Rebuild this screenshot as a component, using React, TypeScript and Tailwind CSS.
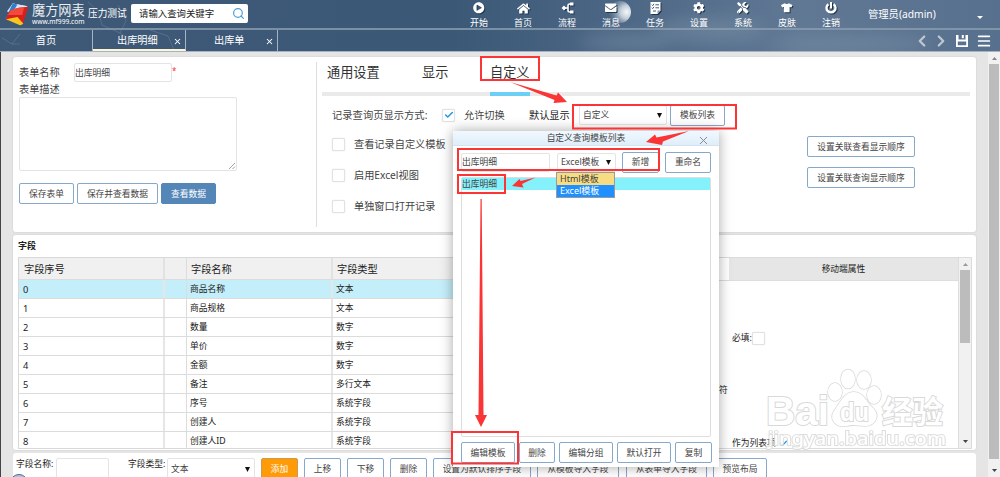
import type { ReactNode } from "react";
import {
  FaCog,
  FaEnvelope,
  FaHome,
  FaPlayCircle,
  FaPowerOff,
  FaTools,
  FaTshirt,
} from "react-icons/fa";
import { Check, ChevronLeft, ChevronRight, Menu, Search, X } from "lucide-react";

const navItems = [
  { label: "开始", icon: <FaPlayCircle /> },
  { label: "首页", icon: <FaHome className="text-[13px]" /> },
  { label: "流程", icon: <FlowIcon /> },
  { label: "消息", icon: <FaEnvelope /> },
  { label: "任务", icon: <TaskIcon /> },
  { label: "设置", icon: <FaCog /> },
  { label: "系统", icon: <FaTools /> },
  { label: "皮肤", icon: <FaTshirt /> },
  { label: "注销", icon: <PowerIcon /> },
];

const fields = [
  ["商品名称", "文本"],
  ["商品规格", "文本"],
  ["数量", "数字"],
  ["单价", "数字"],
  ["金额", "数字"],
  ["备注", "多行文本"],
  ["序号", "系统字段"],
  ["创建人", "系统字段"],
  ["创建人ID", "系统字段"],
];

const buttonColors = {
  outline: "border-[#86a8cb] bg-white text-[#444]",
  primary: "border-[#5486b8] bg-[#5486b8] text-white",
  orange: "border-[#c99a52] bg-[#ff9b06] text-white",
};

function FlowIcon() {
  return (
    <svg width="13" height="12" viewBox="0 0 13 12" fill="none" stroke="#fff" strokeWidth="1.6">
      <path d="M12 2H8.5Q7 2 7 3.500V8.500Q7 10 8.500 10H12M3 6H7" />
      <path d="M9 .5h3.500v3H9zM9 8.500h3.500v3H9z" fill="#fff" stroke="none" />
      <path d="M3 3.600L5.400 6L3 8.400L.6 6z" fill="#fff" stroke="none" />
    </svg>
  );
}

function TaskIcon() {
  return (
    <svg width="11" height="12" viewBox="0 0 11 12">
      <path d="M.5 0h10v8.500L7.500 12h-7z" fill="#fff" />
      <path
        d="M1.800 2.700l.9.900 1.300-1.800M1.800 5.700l.9.900L4 4.800M5.400 2.800h3.600M5.400 5.800h3.600M3 9h3"
        stroke="#3f5a77"
        fill="none"
      />
      <path d="M7.500 12V8.500h3z" fill="#8497ab" />
    </svg>
  );
}

function PowerIcon() {
  return (
    <svg width="12" height="12" viewBox="0 0 12 12" fill="none">
      <path d="M3.400 2.200A4.500 4.500 0 1 0 8.600 2.200" stroke="#fff" strokeWidth="2.400" />
      <path d="M6 0v6.500" stroke="#fff" strokeWidth="2" />
    </svg>
  );
}

function Logo() {
  return (
    <svg width="24" height="24" viewBox="0 0 25 24" className="shrink-0">
      <path d="M8 1L23.500 4L13 12L2 9.500z" fill="#dce9f6" />
      <path d="M8 1L23.500 4L19 7L6 5z" fill="#d3e6f7" />
      <path d="M8 1L13 2L6 13L0 18z" fill="#2f7fd0" />
      <path d="M6 8Q14 5 24 4.500L19 22L1 18Q2 12 6 8z" fill="#d71f1c" />
      <path d="M6 8Q14 5 20 5L18 13L3 13z" fill="#f3483c" />
      <path d="M1 17.500L13 15L19 22Q17 24 15 23.500z" fill="#fbc61c" />
    </svg>
  );
}

function Button({
  variant = "outline",
  className = "",
  children,
}: {
  variant?: keyof typeof buttonColors;
  className?: string;
  children: ReactNode;
}) {
  return (
    <button
      className={`flex h-[21px] shrink-0 items-center justify-center rounded-[2px] border pt-[2px] text-[8.750px] whitespace-nowrap ${buttonColors[variant]} ${className}`}
    >
      {children}
    </button>
  );
}

function Checkbox({ checked = false }: { checked?: boolean }) {
  return (
    <span className="flex h-[13px] w-[13px] shrink-0 items-center justify-center rounded-[2px] border border-[#e2e2e2] bg-white shadow-[0_0_1px_#ccc]">
      {checked && <Check size={10} strokeWidth={3.500} className="text-[#2196e8]" />}
    </span>
  );
}

function Select({ className = "", children }: { className?: string; children: ReactNode }) {
  return (
    <div
      className={`flex shrink-0 items-center justify-between rounded-[2px] border border-[#e4e4e4] bg-white pt-[2px] pr-1 pl-[3px] text-[#444] ${className}`}
    >
      <span className="whitespace-nowrap">{children}</span>
      <svg width="5" height="5" viewBox="0 0 5 5" className="mb-[1px]">
        <path d="M0 0h5L2.500 5z" fill="#111" />
      </svg>
    </div>
  );
}

function Header() {
  return (
    <header className="relative h-[52px] shrink-0 overflow-hidden bg-[linear-gradient(90deg,#3e5976_0%,#3b5877_45%,#4c6785_62%,#607894_80%,#57708d_100%)] text-white">
      <svg className="absolute inset-0" width="1000" height="52" fill="none">
        <defs>
          <filter id="haze" x="-30%" y="-80%" width="160%" height="260%">
            <feGaussianBlur stdDeviation="8" />
          </filter>
          <radialGradient id="moon" cx=".8" cy=".5" r=".75">
            <stop offset="0" stopColor="#fff" stopOpacity=".95" />
            <stop offset=".4" stopColor="#dfe6ed" stopOpacity=".8" />
            <stop offset="1" stopColor="#8296ac" stopOpacity=".15" />
          </radialGradient>
        </defs>
        <g filter="url(#haze)" fill="#93a5b8" opacity=".3">
          <ellipse cx="625" cy="42" rx="46" ry="9" />
          <ellipse cx="710" cy="30" rx="55" ry="12" />
          <ellipse cx="850" cy="44" rx="80" ry="8" />
        </g>
        <circle cx="620" cy="12" r="11" fill="url(#moon)" />
        <g stroke="#8ca0b5" strokeOpacity=".3">
          <path d="M88 2l10 9 14-3M98 11l4 14 18 8M118 5l8 16-6 12 14 8M150 30l18 6 6 14M2 38l10 6 8-10M12 44h8" />
        </g>
      </svg>
      <div className="relative flex h-[28px]">
        <div className="flex w-[131px] items-start pt-[2px] pl-[5px]">
          <Logo />
          <div className="ml-[3px] w-[54px] shrink-0">
            <div className="text-[13.200px] leading-[17px] whitespace-nowrap text-[#e8edf2]">魔方网表</div>
            <div className="text-[6.700px] leading-[6px]">www.mf999.com</div>
          </div>
          <span className="ml-[2px] pt-[5px] text-[9.700px] leading-[14px] whitespace-nowrap">压力测试</span>
        </div>
        <div className="mt-[4px] flex h-[19px] w-[117px] items-center justify-between rounded-[2px] bg-white pr-[3px] pl-[8px]">
          <span className="pt-[1px] text-[9.400px] text-[#222]">请输入查询关键字</span>
          <Search size={13} strokeWidth={2.200} className="text-[#4d9edb]" />
        </div>
        <nav className="ml-[209px] flex">
          {navItems.map((item) => (
            <div key={item.label} className="flex w-[44px] flex-col items-center pt-[2px]">
              <span className="flex h-[12px] items-center text-[11.500px] drop-shadow-[1px_1px_0_#22364c]">
                {item.icon}
              </span>
              <span className="pt-[1px] text-[9px] leading-[15px]">{item.label}</span>
            </div>
          ))}
        </nav>
        <span className="ml-[15px] pt-[6px] text-[10.300px] leading-[16px] whitespace-nowrap">管理员(admin)</span>
        <svg className="mt-[16px] ml-[41px]" width="6" height="3" viewBox="0 0 6 3">
          <path d="M0 0h6L3 3z" fill="#fff" />
        </svg>
      </div>
      <div className="relative flex h-[24px] border-t-2 border-b border-t-[#8b9db0]/80 border-b-[#a5b3c2] text-[10.200px]">
        <div className="flex w-[93px] items-center justify-center border-r border-[#a5b3c2] pt-[1px]">首页</div>
        <div className="flex w-[93px] items-center justify-between border-r border-b-2 border-r-[#a5b3c2] border-b-[#fff6d5] pt-[3px] pr-[3px] pl-[24px]">
          出库明细
          <X size={9} strokeWidth={2.800} />
        </div>
        <div className="flex w-[92px] items-center justify-between border-r border-[#a5b3c2] pt-[1px] pr-[3px] pl-[28px]">
          出库单
          <X size={9} strokeWidth={2.800} />
        </div>
        <div className="ml-auto flex items-center pr-[8px]">
          <ChevronLeft size={18} strokeWidth={3} className="text-[#bfc8d1]" />
          <ChevronRight size={18} strokeWidth={3} className="ml-[1px] text-[#bfc8d1]" />
          <svg className="ml-[6px]" width="12" height="12" viewBox="0 0 12 12">
            <path
              d="M0 0h2.500v4.500h7V0H12v12H0zM1.800 6.500V10.300h8.400V6.500zM5.800 0h2V3.300h-2z"
              fill="#fff"
              fillRule="evenodd"
            />
          </svg>
          <Menu size={16} strokeWidth={2.600} className="ml-[8px]" />
        </div>
      </div>
    </header>
  );
}

function FormPanel() {
  return (
    <section className="flex h-[175px] shrink-0 rounded-[3px] bg-white py-[5px] shadow-[0_0_1px_1px_#dcdcdc]">
      <div className="w-[304px] shrink-0 border-r border-[#dedede] pl-[6px] text-[10.200px] text-[#444]">
        <div className="flex h-[21px] items-center">
          <span className="w-[55px] pt-[1px]">表单名称</span>
          <div className="flex h-[19px] w-[98px] items-center rounded-[2px] border border-[#e4e4e4] pt-[2px] text-[8.750px]">
            出库明细
          </div>
          <span className="pb-[4px] text-[8px] text-red-500">*</span>
        </div>
        <div className="h-[14px] leading-[13px]">表单描述</div>
        <div className="flex h-[74px] w-[218px] items-end justify-end rounded-[2px] border border-[#e4e4e4]">
          <svg width="7" height="7" viewBox="0 0 7 7" stroke="#888" strokeWidth=".8">
            <path d="M0 6L6 0M3.500 6L6 3.500" />
          </svg>
        </div>
        <div className="mt-[12px] flex gap-[3px]">
          <Button className="w-[55px]">保存表单</Button>
          <Button className="w-[81px]">保存并查看数据</Button>
          <Button variant="primary" className="w-[55px]">
            查看数据
          </Button>
        </div>
      </div>
      <div className="w-[653px] pl-[5px]">
        <div className="flex h-[34px] border-b-4 border-[#eaeaea] pl-[5px] text-[13.200px] leading-[20px] text-[#333]">
          <span className="w-[95px]">通用设置</span>
          <span className="w-[68px]">显示</span>
          <span className="-mb-[4px] border-b-4 border-[#6dcff6]">自定义</span>
        </div>
        <div className="flex pl-[10px] text-[10.200px] text-[#444]">
          <div className="w-[475px] shrink-0">
            <div className="flex h-[38px] items-center whitespace-nowrap">
              <span className="w-[110px] pt-[1px] text-[10.300px]">记录查询页显示方式:</span>
              <Checkbox checked />
              <span className="ml-[9px] w-[65px] pt-[1px]">允许切换</span>
              <span className="w-[50px] pt-[1px] text-[#222]">默认显示</span>
              <Select className="h-[20px] w-[88px] text-[8.750px]">自定义</Select>
              <Button className="ml-[3px] w-[55px]">模板列表</Button>
            </div>
            {["查看记录自定义模板", "启用Excel视图", "单独窗口打开记录"].map((label) => (
              <div key={label} className="mb-[10px] flex h-[21px] items-center gap-[9px] pb-[1px]">
                <Checkbox />
                <span className="pt-[1px]">{label}</span>
              </div>
            ))}
          </div>
          <div className="flex flex-col gap-[10px] pt-[40px]">
            <Button className="w-[108px]">设置关联查看显示顺序</Button>
            <Button className="w-[108px]">设置关联查询显示顺序</Button>
          </div>
        </div>
      </div>
    </section>
  );
}

function FieldPanel() {
  return (
    <section className="h-[215px] shrink-0 rounded-[3px] bg-white pr-[4px] pl-[5px] shadow-[0_0_1px_1px_#dcdcdc]">
      <h2 className="h-[22px] text-[9px] leading-[22px] font-bold text-[#222]">字段</h2>
      <div className="flex h-[192px]">
        <div className="w-[440px] shrink-0 overflow-hidden border border-r-0 border-[#d8d8d8] text-[8.750px] text-[#222]">
          <div className="flex h-[22px] items-center border-b border-[#dcdcdc] bg-[#f0f0f0] text-[10.200px]">
            <span className="h-full w-[146px] border-r-2 border-[#e2e2e2] pl-[5px] leading-[22px]">字段序号</span>
            <span className="h-full w-[22px] border-r border-[#dcdcdc]" />
            <span className="h-full w-[146px] border-r-2 border-[#e2e2e2] pl-[4px] leading-[22px]">字段名称</span>
            <span className="h-full pl-[4px] leading-[22px]">字段类型</span>
          </div>
          {fields.map(([name, type], i) => (
            <div
              key={name}
              className={`flex h-[19.050px] border-b border-[#dcdcdc] leading-[19px] ${i === 0 ? "bg-[#c4eef9]" : "bg-white"}`}
            >
              <span className="w-[146px] border-r-2 border-[#e6e6e6] pl-[4px] text-[9.300px]">{i}</span>
              <span className="w-[22px] border-r border-[#dcdcdc]" />
              <span className="w-[146px] border-r-2 border-[#e6e6e6] pl-[3px]">{name}</span>
              <span className="pl-[3px]">{type}</span>
            </div>
          ))}
        </div>
        <div className="flex flex-1 border border-[#dcdcdc] text-[8.750px] text-[#222]">
          <div className="flex-1">
            <div className="flex h-[23px] border-b border-[#ddd]">
              <div className="w-[270px]" />
              <div className="flex flex-1 items-center justify-center bg-[#e6e6e6] pt-[2px]">移动端属性</div>
            </div>
            <div className="flex h-[114px] items-center pl-[273px]">
              <span className="w-[20px] pt-[2px] whitespace-nowrap">必填:</span>
              <Checkbox />
            </div>
            <div className="-mt-[12px] pl-[260px] leading-[14px]">符</div>
            <div className="mt-[39px] flex items-center gap-[3px] pl-[273px] leading-[14px]">
              作为列表项
              <Check size={9} strokeWidth={3.500} className="text-[#2196e8]" />
            </div>
          </div>
          <div className="flex w-[13px] flex-col items-center border-l border-[#ddd] bg-[#f1f1f1] py-[5px]">
            <svg width="5" height="3" viewBox="0 0 5 3">
              <path d="M0 3h5L2.500 0z" fill="#999" />
            </svg>
            <div className="mt-[4px] h-[73px] w-[10px] bg-[#bcbcbc]" />
            <svg className="mt-auto" width="5" height="3" viewBox="0 0 5 3">
              <path d="M0 0h5L2.500 3z" fill="#444" />
            </svg>
          </div>
        </div>
      </div>
    </section>
  );
}

function BottomBar() {
  return (
    <section className="flex flex-1 items-start rounded-[3px] bg-white pt-[5px] pl-[3px] text-[8.750px] whitespace-nowrap text-[#222]">
      <span className="w-[40px] leading-[13px]">字段名称:</span>
      <div className="h-[21px] w-[53px] rounded-[2px] border border-[#e4e4e4]" />
      <span className="ml-[19px] w-[39px] leading-[13px]">字段类型:</span>
      <Select className="mr-[6px] h-[21px] w-[88px]">文本</Select>
      <div className="flex gap-[6px]">
        <Button variant="orange" className="w-[37px]">
          添加
        </Button>
        <Button className="w-[37px]">上移</Button>
        <Button className="w-[37px]">下移</Button>
        <Button className="w-[37px]">删除</Button>
        <Button className="w-[98px]">设置为默认排序字段</Button>
        <Button className="w-[82px]">从模板导入字段</Button>
        <Button className="ml-[1px] w-[81px]">从表单导入字段</Button>
        <Button className="w-[54px]">预览布局</Button>
      </div>
    </section>
  );
}

function TemplateDialog() {
  return (
    <div className="absolute top-[131px] left-[453px] flex h-[336px] w-[266px] flex-col bg-white pl-[1px] text-[8.750px] text-[#444] shadow-[0_0_12px_rgba(0,0,0,0.35)]">
      <div className="relative -ml-[1px] flex h-[15px] items-center justify-center border-b border-[#d3e3ee] bg-gradient-to-b from-[#f1f8fe] to-[#dfeefa] pt-[2px]">
        自定义查询模板列表
        <X size={13} strokeWidth={1.800} className="absolute top-[3px] right-[9px] text-[#888]" />
      </div>
      <div className="flex h-[31px] items-center pt-[1px] pl-[7px]">
        <div className="flex h-[19px] w-[89px] items-center rounded-[2px] border border-[#e4e4e4] pt-[1px]">
          出库明细
        </div>
        <Select className="ml-[7px] h-[19px] w-[59px]">Excel模板</Select>
        <Button className="ml-[6px] w-[37px]">新增</Button>
        <Button className="ml-[6px] w-[46px]">重命名</Button>
      </div>
      <div className="ml-[7px] h-[260px] w-[250px] rounded-[2px] border border-[#dedede]">
        <div className="h-[12px] bg-[#84f1fb] leading-[13px]">出库明细</div>
      </div>
      <div className="mt-[5px] ml-[7px] flex gap-[4px]">
        <Button className="w-[54px]">编辑模板</Button>
        <Button className="w-[36px]">删除</Button>
        <Button className="w-[54px]">编辑分组</Button>
        <Button className="w-[54px]">默认打开</Button>
        <Button className="w-[37px]">复制</Button>
      </div>
      <div className="absolute top-[41px] left-[103px] w-[59px] border border-[#9a9a9a] text-[9px] leading-[12px]">
        <div className="bg-[#f8dc82] pl-[3px]">Html模板</div>
        <div className="bg-[#1e90ff] pl-[3px] text-white">Excel模板</div>
      </div>
    </div>
  );
}

function Watermark() {
  return (
    <svg
      className="absolute top-[365px] left-[762px]"
      width="190"
      height="90"
      fill="#fff"
      stroke="#d9d9d9"
      strokeWidth="2"
    >
      <g fontFamily="'Liberation Sans','Noto Sans CJK SC',sans-serif" fontWeight="bold" paintOrder="stroke">
        <text x="4" y="60" fontSize="41" textLength="63" lengthAdjust="spacingAndGlyphs">
          Bai
        </text>
        <text x="120" y="58" fontSize="31" textLength="61" lengthAdjust="spacingAndGlyphs">
          经验
        </text>
        <g strokeWidth="1.500">
          <ellipse cx="73" cy="27" rx="7" ry="9" />
          <ellipse cx="86" cy="14" rx="7" ry="9.500" />
          <ellipse cx="102" cy="15" rx="7" ry="9" />
          <ellipse cx="112" cy="30" rx="7" ry="9" />
          <path d="M92 27C102 27 104 37 111 43C119 51 113 61 103 61C96 61 92 59 85 61C73 63 67 54 72 46C78 38 82 27 92 27z" />
        </g>
        <text x="78" y="56" fontSize="25" textLength="29" lengthAdjust="spacingAndGlyphs">
          du
        </text>
      </g>
      <text
        x="6"
        y="80"
        fontFamily="'Noto Sans',sans-serif"
        fontSize="18"
        fontWeight="500"
        paintOrder="stroke"
        textLength="178"
        lengthAdjust="spacingAndGlyphs"
        opacity=".85"
      >
        jingyan.baidu.com
      </text>
    </svg>
  );
}

// red boxes and arrows that walk through the steps
function Annotations() {
  return (
    <svg className="pointer-events-none absolute inset-0" width="1000" height="477" fill="none">
      <g stroke="#fb3535" strokeWidth="2">
        <rect x="481" y="57" width="58" height="23" />
        <rect x="573" y="105" width="163" height="23.500" />
        <rect x="458" y="149" width="201" height="21" />
        <rect x="458" y="175" width="47" height="18" />
        <rect x="452" y="432" width="66" height="31.500" />
      </g>
      <g fill="#fb3535">
        <path d="M510 82L556.500 95.500L558 92.500L567 102L553.500 103L554.500 100z" />
        <path d="M689 131L663 141.500L662 145L646 142L655 134.500L656.500 137.500z" />
        <path d="M535.500 177.500L522 184L523.500 187.500L512 186L519.500 179L520.500 181z" />
        <path d="M480.500 199h1.200L483.500 415H487L481 427L475 415H478.500z" />
      </g>
    </svg>
  );
}

export default function App() {
  return (
    <div className="relative flex h-[477px] w-[1000px] flex-col overflow-hidden bg-[#e5e5e5] font-['Noto_Sans','Noto_Sans_CJK_SC',sans-serif]">
      <Header />
      <main className="flex min-h-0 flex-1 border-l border-[#444]">
        <div className="ml-[12px] flex w-[963px] shrink-0 flex-col gap-[3px] pt-[5px]">
          <FormPanel />
          <FieldPanel />
          <BottomBar />
        </div>
        <div className="ml-auto flex w-[12px] flex-col items-center bg-[#f1f1f1] py-[5px]">
          <svg width="5" height="3" viewBox="0 0 5 3">
            <path d="M0 3h5L2.500 0z" fill="#888" />
          </svg>
          <div className="mt-[4px] h-[395px] w-[10px] bg-[#bcbcbc]" />
          <svg className="mt-auto" width="5" height="3" viewBox="0 0 5 3">
            <path d="M0 0h5L2.500 3z" fill="#444" />
          </svg>
        </div>
      </main>
      <div className="absolute top-[474px] left-[10px] h-[18px] w-[18px] rounded-full border border-[#4e6b90] bg-[#b4c4da]" />
      <TemplateDialog />
      <Watermark />
      <Annotations />
    </div>
  );
}
